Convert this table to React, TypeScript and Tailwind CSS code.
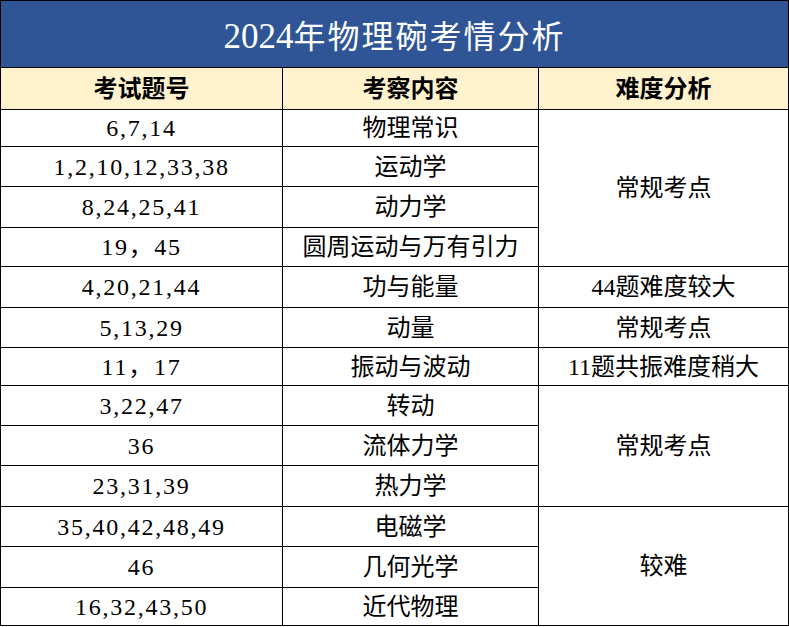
import React from "react";

type Row = {
  nums: string;
  topic: string;
  h: number;
  level?: { text: string; span: number };
};

// row heights are taken from the screenshot grid lines
const rows: Row[] = [
  { nums: "6,7,14", topic: "物理常识", h: 37, level: { text: "常规考点", span: 4 } },
  { nums: "1,2,10,12,33,38", topic: "运动学", h: 40 },
  { nums: "8,24,25,41", topic: "动力学", h: 41 },
  { nums: "19，45", topic: "圆周运动与万有引力", h: 39 },
  { nums: "4,20,21,44", topic: "功与能量", h: 41, level: { text: "44题难度较大", span: 1 } },
  { nums: "5,13,29", topic: "动量", h: 40, level: { text: "常规考点", span: 1 } },
  { nums: "11，17", topic: "振动与波动", h: 38, level: { text: "11题共振难度稍大", span: 1 } },
  { nums: "3,22,47", topic: "转动", h: 40, level: { text: "常规考点", span: 3 } },
  { nums: "36", topic: "流体力学", h: 40 },
  { nums: "23,31,39", topic: "热力学", h: 41 },
  { nums: "35,40,42,48,49", topic: "电磁学", h: 40, level: { text: "较难", span: 3 } },
  { nums: "46", topic: "几何光学", h: 41 },
  { nums: "16,32,43,50", topic: "近代物理", h: 38 },
];

const cell = "border border-black text-center align-middle p-0 leading-none";

export default function App() {
  return (
    <div
      className="w-[789px] h-[627px] bg-white text-black"
      style={{ fontFamily: '"Liberation Serif", "Noto Sans CJK SC", serif' }}
    >
      <table className="w-[788px] border-collapse table-fixed">
        <colgroup>
          <col className="w-[282px]" />
          <col className="w-[256px]" />
          <col className="w-[250px]" />
        </colgroup>
        <tbody>
          <tr className="h-[67px]">
            <td colSpan={3} className={`${cell} bg-[#2f5597] text-white pt-[3px]`}>
              <span
                className="text-[35px]"
                style={{ fontFamily: '"Liberation Serif", serif' }}
              >
                2024
              </span>
              <span
                className="text-[32px] tracking-[2px]"
                style={{ fontFamily: '"Noto Sans CJK SC", sans-serif' }}
              >
                年物理碗考情分析
              </span>
            </td>
          </tr>
          <tr className="h-[42px] bg-[#fff2cc] font-bold text-[24px]">
            <td className={cell}>考试题号</td>
            <td className={cell}>考察内容</td>
            <td className={cell}>难度分析</td>
          </tr>
          {rows.map((r) => (
            <tr key={r.nums} style={{ height: r.h }} className="text-[24px]">
              <td className={`${cell} tracking-[1.75px]`}>{r.nums}</td>
              <td className={cell}>{r.topic}</td>
              {r.level && (
                <td rowSpan={r.level.span} className={cell}>
                  {r.level.text}
                </td>
              )}
            </tr>
          ))}
        </tbody>
      </table>
    </div>
  );
}
